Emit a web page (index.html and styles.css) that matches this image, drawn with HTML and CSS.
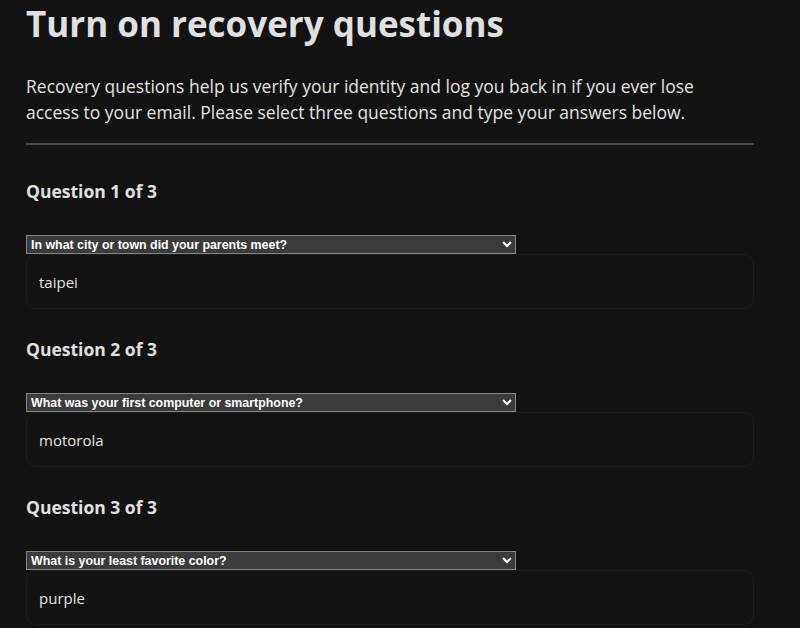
FILE: index.html
```html
<!DOCTYPE html>
<html lang="en">
<head>
<meta charset="utf-8">
<title>Turn on recovery questions</title>
<link rel="stylesheet" href="styles.css">
</head>
<body>
<main class="page">
  <h1 class="title">Turn on recovery questions</h1>
  <p class="intro">Recovery questions help us verify your identity and log you back in if you ever lose access to your email. Please select three questions and type your answers below.</p>
  <hr class="rule">

  <section class="question">
    <h3 class="q-heading">Question 1 of 3</h3>
    <select class="q-select">
      <option>In what city or town did your parents meet?</option>
    </select>
    <input class="q-answer" type="text" value="taipei">
  </section>

  <section class="question">
    <h3 class="q-heading">Question 2 of 3</h3>
    <select class="q-select">
      <option>What was your first computer or smartphone?</option>
    </select>
    <input class="q-answer" type="text" value="motorola">
  </section>

  <section class="question">
    <h3 class="q-heading">Question 3 of 3</h3>
    <select class="q-select">
      <option>What is your least favorite color?</option>
    </select>
    <input class="q-answer" type="text" value="purple">
  </section>
</main>
</body>
</html>
```

FILE: styles.css
```css
:root {
  color-scheme: dark;
}

html, body {
  margin: 0;
  padding: 0;
  background: #121212;
}

body {
  font-family: "Open Sans", "Noto Sans", sans-serif;
  color: #e2e2e2;
}

.page {
  width: 728px;
  padding: 0 46px 0 26px;
}

.title {
  margin: 0;
  font-size: 35px;
  line-height: 48px;
  font-weight: 700;
  color: #e0e0e0;
}

.intro {
  max-width: 700px;
  margin: 25px 0 0;
  font-size: 17.5px;
  line-height: 26px;
}

.rule {
  margin: 18px 0 0;
  border: 0;
  height: 2px;
  background: #454545;
}

.question {
  display: flex;
  flex-direction: column;
  align-items: flex-start;
}

.q-heading {
  margin: 31px 0 0;
  font-size: 17.5px;
  line-height: 30px;
  font-weight: 700;
  color: #e0e0e0;
}

.question + .question .q-heading {
  margin-top: 25px;
}

.q-select {
  margin-top: 29px;
  width: 490px;
  height: 19px;
  font-family: "Liberation Sans", Arial, sans-serif;
  font-size: 12.4px;
  font-weight: 700;
  color: #fff;
  background-color: #3b3b3b;
  border: 1px solid #858585;
  border-radius: 0;
  padding: 0;
}

.q-answer {
  box-sizing: border-box;
  width: 728px;
  height: 55px;
  margin: 0;
  padding: 0 12px;
  background: #121212;
  border: 1px solid #1d1d1d;
  border-radius: 10px;
  font-family: "Open Sans", "Noto Sans", sans-serif;
  font-size: 15px;
  color: #e2e2e2;
  outline: none;
}
```
